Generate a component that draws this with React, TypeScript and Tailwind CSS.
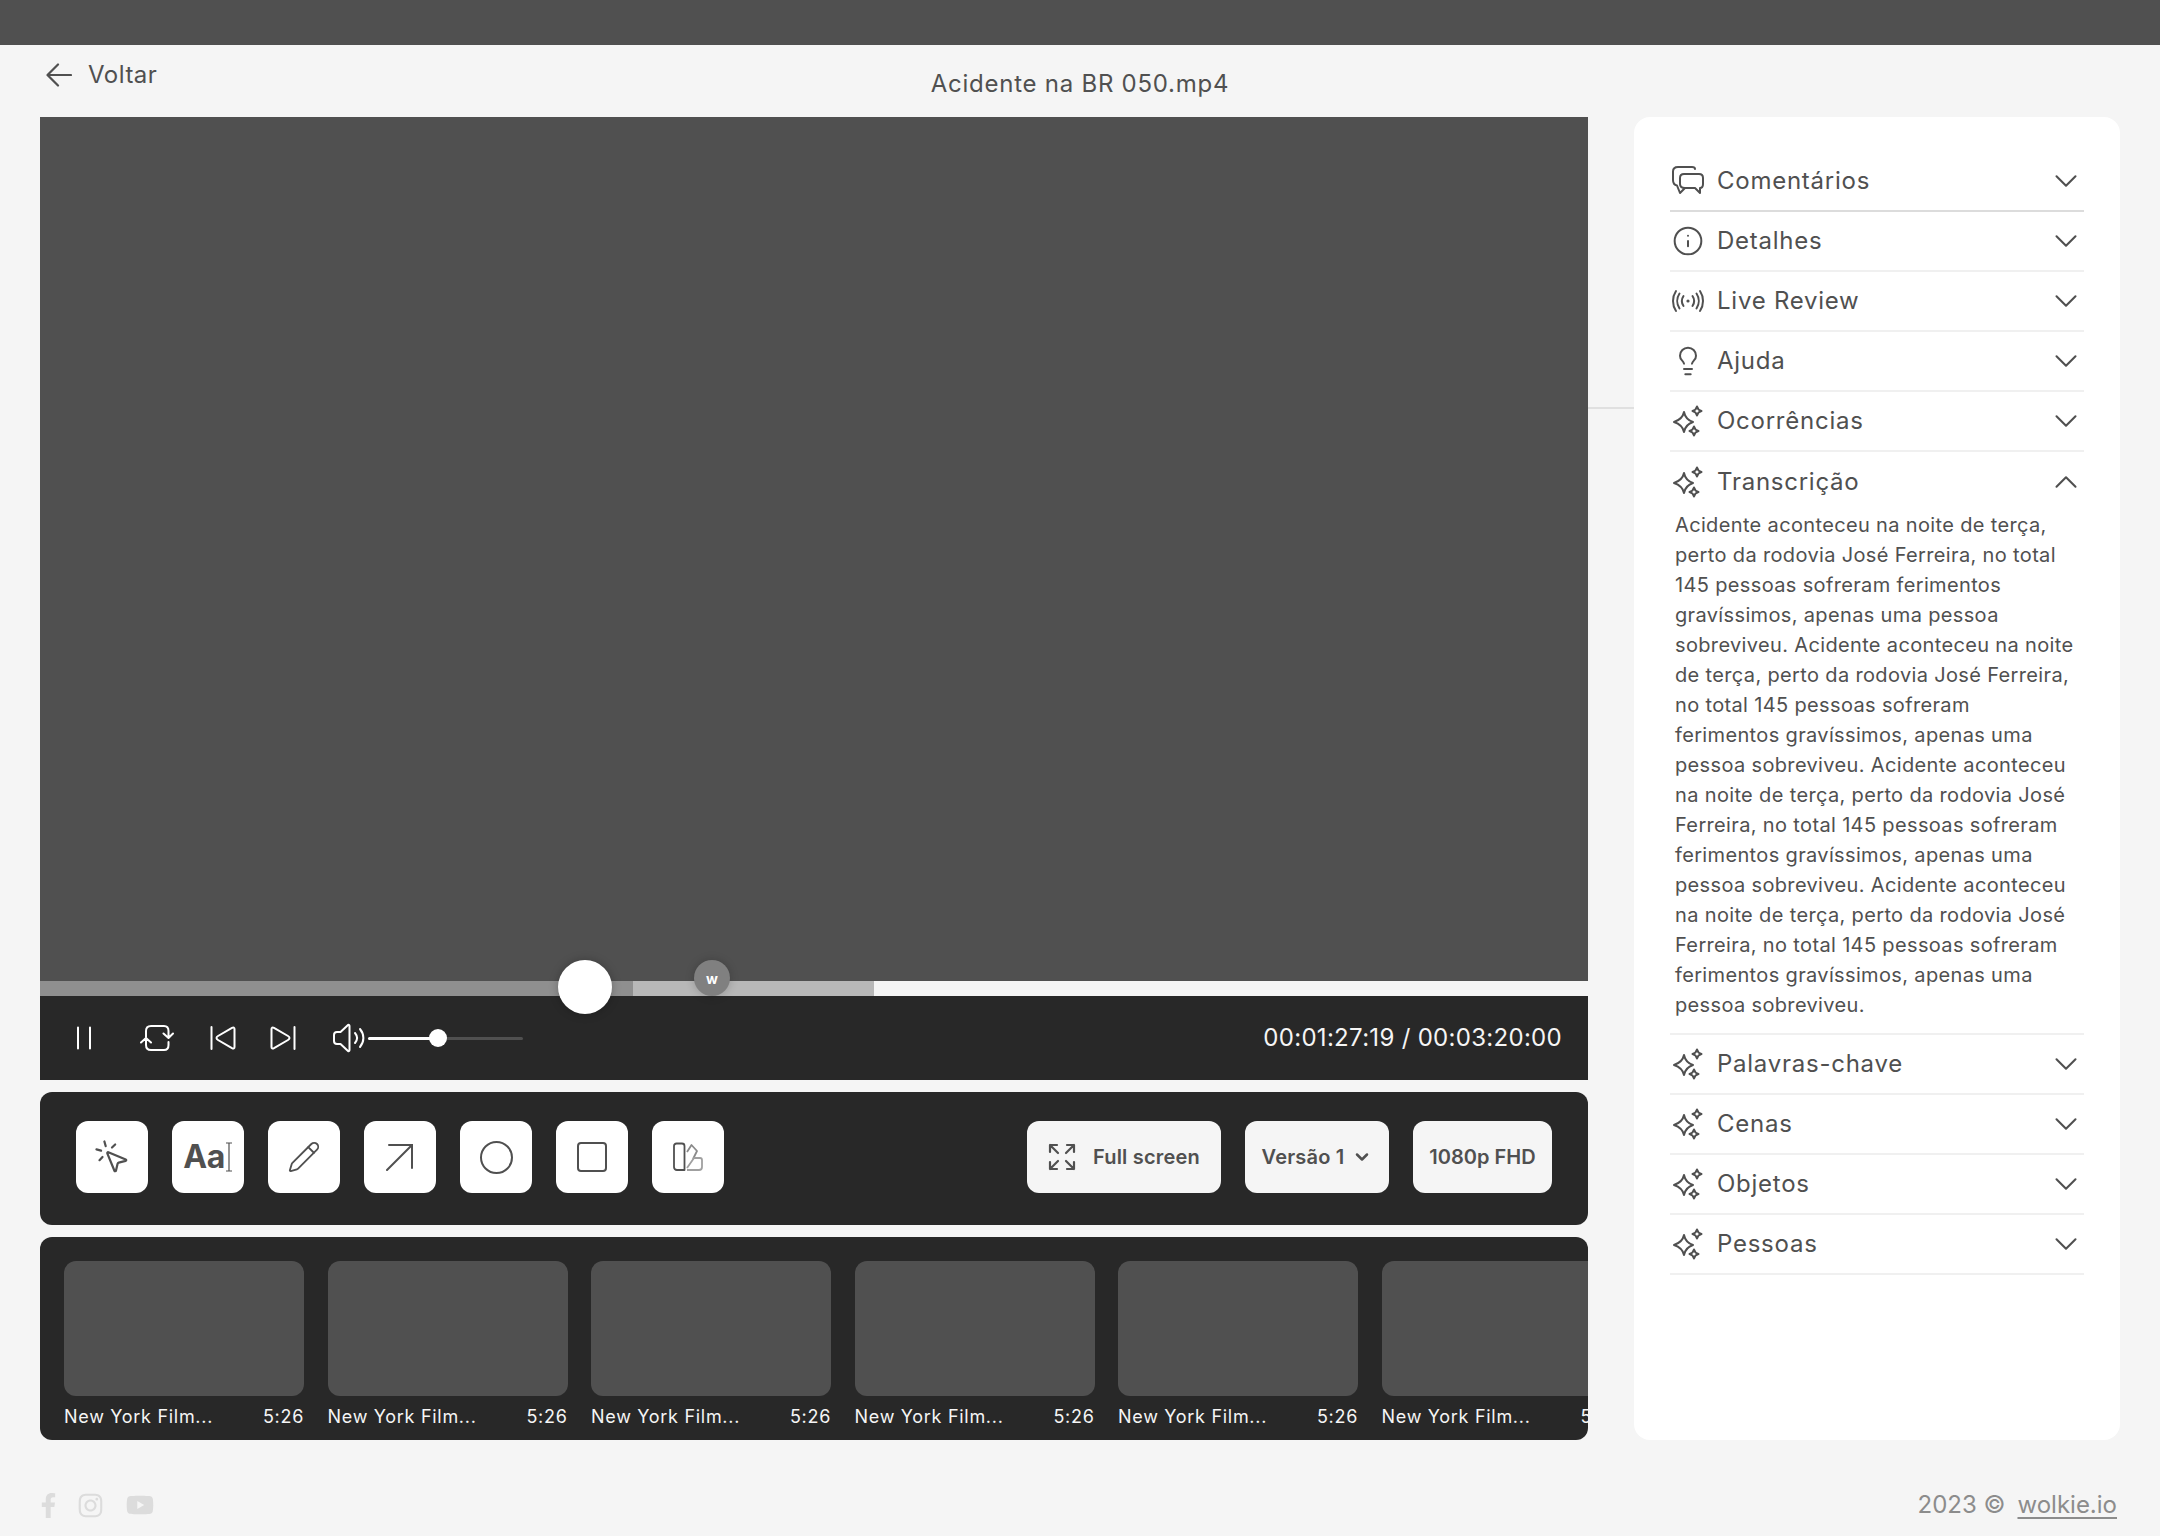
import { ChevronDown, ChevronUp, Info, Lightbulb, MousePointerClick, Pencil } from "lucide-react"
import { FaFacebookF, FaInstagram, FaYoutube } from "react-icons/fa"

const transcript = [
  "Acidente aconteceu na noite de terça,",
  "perto da rodovia José Ferreira, no total",
  "145 pessoas sofreram ferimentos",
  "gravíssimos, apenas uma pessoa",
  "sobreviveu. Acidente aconteceu na noite",
  "de terça, perto da rodovia José Ferreira,",
  "no total 145 pessoas sofreram",
  "ferimentos gravíssimos, apenas uma",
  "pessoa sobreviveu. Acidente aconteceu",
  "na noite de terça, perto da rodovia José",
  "Ferreira, no total 145 pessoas sofreram",
  "ferimentos gravíssimos, apenas uma",
  "pessoa sobreviveu. Acidente aconteceu",
  "na noite de terça, perto da rodovia José",
  "Ferreira, no total 145 pessoas sofreram",
  "ferimentos gravíssimos, apenas uma",
  "pessoa sobreviveu.",
]

function Sparkles() {
  return (
    <svg viewBox="0 0 32 32" className="w-8 h-8" fill="none" stroke="#505050" strokeWidth="2" strokeLinejoin="round">
      <path d="M12 7 C13 12 15 15 21 17 C15 19 13 22 12 27 C11 22 8 19 2 17 C8 15 11 12 12 7 Z" />
      <path d="M25 1.5 C25.5 4 26.5 5.2 29.5 6 C26.5 6.8 25.5 8 25 10.5 C24.5 8 23.5 6.8 20.5 6 C23.5 5.2 24.5 4 25 1.5 Z" />
      <path d="M22 21.5 C22.5 24 23.5 25.2 26.5 26 C23.5 26.8 22.5 28 22 30.5 C21.5 28 20.5 26.8 17.5 26 C20.5 25.2 21.5 24 22 21.5 Z" />
    </svg>
  )
}

function CommentsIcon() {
  return (
    <svg viewBox="0 0 32 32" className="w-8 h-8" fill="none" stroke="#505050" strokeWidth="2" strokeLinejoin="round" strokeLinecap="round">
      <path d="M23 4 C23 2.5 22 2 20 2 H6 C3 2 1 3.5 1 6.5 V15 C1 18 2.5 20 5 20.5 L8 28 L13 23" />
      <path d="M12 9 H27 C29.5 9 31 10.5 31 13 V19 C31 21.5 30 23 28 23 L28 28 L23 23 H13 C10 23 8 21.5 8 19 V13 C8 10.5 9.5 9 12 9 Z" />
    </svg>
  )
}

function LiveIcon() {
  return (
    <svg viewBox="0 0 32 32" className="w-8 h-8" fill="none" stroke="#505050" strokeWidth="2" strokeLinecap="round">
      <circle cx="16" cy="16" r="1.6" fill="#505050" stroke="none" />
      <path d="M11.5 11 C9.5 14 9.5 18 11.5 21 M20.5 11 C22.5 14 22.5 18 20.5 21" />
      <path d="M7.5 8.5 C4.5 13 4.5 19 7.5 23.5 M24.5 8.5 C27.5 13 27.5 19 24.5 23.5" />
      <path d="M4 6 C0 12 0 20 4 26 M28 6 C32 12 32 20 28 26" />
    </svg>
  )
}

const sections = [
  { label: "Comentários", icon: <CommentsIcon />, strong: true },
  { label: "Detalhes", icon: <Info className="w-8 h-8 text-[#505050]" strokeWidth={1.5} /> },
  { label: "Live Review", icon: <LiveIcon /> },
  { label: "Ajuda", icon: <Lightbulb className="w-8 h-8 text-[#505050]" strokeWidth={1.5} /> },
  { label: "Ocorrências", icon: <Sparkles /> },
]

const aiSections = ["Palavras-chave", "Cenas", "Objetos", "Pessoas"]

function Row({ label, icon, open, strong }: { label: string; icon: React.ReactNode; open?: boolean; strong?: boolean }) {
  return (
    <div className={`h-[60px] flex items-center ${open ? "" : strong ? "border-b-2 border-[#dcdcdc]" : "border-b-2 border-[#f0f0f0]"}`}>
      <div className="w-[47px] pl-[2px] shrink-0 flex items-center">{icon}</div>
      <span className="flex-1 text-[24px] tracking-[0.75px] text-[#505050]">{label}</span>
      {open ? (
        <ChevronUp className="w-[38px] h-[38px] mr-[-1px] text-[#505050]" strokeWidth={1.3} />
      ) : (
        <ChevronDown className="w-[38px] h-[38px] mr-[-1px] text-[#505050]" strokeWidth={1.3} />
      )}
    </div>
  )
}

function ToolButton({ children }: { children: React.ReactNode }) {
  return <button className="w-[72px] h-[72px] rounded-[12px] bg-white flex items-center justify-center text-[#505050]">{children}</button>
}

export default function App() {
  return (
    <div className="min-h-[1536px] bg-[#f5f5f5] font-['Inter',sans-serif] text-[#505050]">
      <div className="h-[45px] bg-[#505050]" />

      {/* Header */}
      <div className="h-[72px] grid grid-cols-3 px-[40px]">
        <div className="flex items-center gap-[16px] pb-[13px] pl-[6px]">
          <svg viewBox="0 0 26 24" className="w-[26px] h-[24px]" fill="none" stroke="#505050" strokeWidth="2.2" strokeLinecap="round" strokeLinejoin="round">
            <path d="M25 12 H2 M12 1.5 L1.5 12 L12 22.5" />
          </svg>
          <span className="text-[24px] tracking-[0.5px]">Voltar</span>
        </div>
        <div className="text-center text-[24px] tracking-[0.75px] pt-[21px] whitespace-nowrap">Acidente na BR 050.mp4</div>
      </div>

      <div className="flex px-[40px]">
        {/* Left column */}
        <div className="w-[1548px] shrink-0">
          <div className="h-[864px] bg-[#505050]" />

          {/* Progress */}
          <div className="relative h-[15px] flex bg-[#f5f5f5]">
            <div className="w-[593px] bg-[#8f8f8f]" />
            <div className="w-[241px] bg-[#b8b8b8]" />
            <div className="absolute left-[518px] top-[-21px] w-[54px] h-[54px] rounded-full bg-white shadow-[0_0_10px_rgba(0,0,0,0.25)]" />
            <div className="absolute left-[654px] top-[-21px] w-[36px] h-[36px] rounded-full bg-[#808080] shadow-[0_0_10px_rgba(0,0,0,0.2)] flex items-center justify-center text-white text-[14px] font-bold">
              w
            </div>
          </div>

          {/* Player controls */}
          <div className="h-[84px] bg-[#282828] flex items-center pl-[37px] pr-[26px] text-white">
            <svg viewBox="0 0 14 24" className="w-[14px] h-[24px]" stroke="white" strokeWidth="2" strokeLinecap="round">
              <path d="M1 1.5 V22.5 M13 1.5 V22.5" />
            </svg>
            <svg viewBox="0 0 34 28" className="w-[34px] h-[28px] ml-[49px]" fill="none" stroke="white" strokeWidth="2" strokeLinecap="round" strokeLinejoin="round">
              <path d="M6 13 V7 C6 3.5 8 2 11 2 H24 C27 2 28.5 4 28.5 7 V13 M23.5 9.5 L28.5 14 L33 9.5" />
              <path d="M6 15 V21 C6 24.500 8 26 11 26 H24 C27 26 28.5 24.500 28.5 21 V18 M1 18.500 L6 14 L11 18.500" />
            </svg>
            <svg viewBox="0 0 26 24" className="w-[26px] h-[24px] ml-[36px]" fill="none" stroke="white" strokeWidth="2" strokeLinecap="round" strokeLinejoin="round">
              <path d="M1.500 1 V23 M24.500 3 C24.500 1.500 23.500 1 22 1.800 L8 10 C6 11.200 6 12.800 8 14 L22 22.200 C23.500 23 24.500 22.500 24.500 21 Z" />
            </svg>
            <svg viewBox="0 0 26 24" className="w-[26px] h-[24px] ml-[34px]" fill="none" stroke="white" strokeWidth="2" strokeLinecap="round" strokeLinejoin="round">
              <path d="M24.500 1 V23 M1.500 3 C1.500 1.500 2.500 1 4 1.800 L18 10 C20 11.200 20 12.800 18 14 L4 22.200 C2.500 23 1.500 22.500 1.500 21 Z" />
            </svg>
            <svg viewBox="0 0 32 30" className="w-[32px] h-[30px] ml-[37px]" fill="none" stroke="white" strokeWidth="2" strokeLinecap="round" strokeLinejoin="round">
              <path d="M15 2 L7.500 9 H4 C2 9 1 10.500 1 12 V18 C1 19.500 2 21 4 21 H7.500 L15 28 C16 28.500 16.500 28 16.500 27 V3 C16.500 2 16 1.500 15 2 Z" />
              <path d="M22 10 C24.500 13 24.500 17 22 20 M27 6 C31.500 11.500 31.500 18.500 27 24" />
            </svg>
            <div className="relative w-[155px] h-[3px] ml-[3px] bg-[#505050] rounded-full">
              <div className="h-full w-[70px] bg-white rounded-full" />
              <div className="absolute left-[61px] top-[-7.500px] w-[18px] h-[18px] rounded-full bg-white" />
            </div>
            <div className="ml-auto text-[24px] text-[#f5f5f5] whitespace-nowrap tracking-[0.3px]">00:01:27:19 / 00:03:20:00</div>
          </div>

          {/* Toolbar */}
          <div className="mt-[12px] h-[133px] rounded-[12px] bg-[#282828] flex items-center px-[36px] pb-[3px] justify-between">
            <div className="flex gap-[24px]">
              <ToolButton>
                <MousePointerClick className="w-[38px] h-[38px]" strokeWidth={1.4} />
              </ToolButton>
              <ToolButton>
                <span className="text-[32px] font-bold tracking-[-0.5px]">Aa</span>
                <svg viewBox="0 0 8 30" className="w-[8px] h-[30px]" fill="none" stroke="#505050" strokeWidth="1.2">
                  <path d="M1 1 H7 M4 1 V29 M1 29 H7" />
                </svg>
              </ToolButton>
              <ToolButton>
                <Pencil className="w-[34px] h-[34px]" strokeWidth={1.3} />
              </ToolButton>
              <ToolButton>
                <svg viewBox="0 0 28 28" className="w-[28px] h-[28px]" fill="none" stroke="#505050" strokeWidth="2" strokeLinecap="round">
                  <path d="M3 2 H26 V25 M26 2 L1 27" />
                </svg>
              </ToolButton>
              <ToolButton>
                <div className="w-[33px] h-[33px] rounded-full border-2 border-[#505050]" />
              </ToolButton>
              <ToolButton>
                <div className="w-[30px] h-[30px] rounded-[4px] border-2 border-[#505050]" />
              </ToolButton>
              <ToolButton>
                <svg viewBox="0 0 30 30" className="w-[30px] h-[30px]" fill="none" stroke="#505050" strokeWidth="1.8" strokeLinejoin="round">
                  <path d="M1 4 C1 2.500 2 1.500 3.500 1.500 H9 C10.500 1.500 11.500 2.500 11.500 4 V28 H4 C2 28 1 26.500 1 25 Z" />
                  <path d="M14 10 L18.500 3 L24 9 L20 17" stroke="#8a8a8a" />
                  <path d="M14 28 H26 C28 28 29 27 29 25 V18 C29 16.500 28 16 27 16 H21 L14 26" stroke="#a0a0a0" />
                </svg>
              </ToolButton>
            </div>

            <div className="flex gap-[24px] text-[20px] font-semibold">
              <button className="h-[72px] w-[194px] rounded-[12px] bg-[#f5f5f5] flex items-center justify-center gap-[17px]">
                <svg viewBox="0 0 28 28" className="w-[28px] h-[28px]" fill="none" stroke="#505050" strokeWidth="2.200" strokeLinecap="round" strokeLinejoin="round">
                  <path d="M2 9 V2 H9 M2 2 L10 10 M26 9 V2 H19 M26 2 L18 10 M2 19 V26 H9 M2 26 L10 18 M26 19 V26 H19 M26 26 L18 18" />
                </svg>
                <span className="tracking-[0.2px] whitespace-nowrap">Full screen</span>
              </button>
              <button className="h-[72px] w-[144px] rounded-[12px] bg-[#f5f5f5] flex items-center justify-center gap-[8px]">
                <span className="whitespace-nowrap tracking-[0.2px]">Versão 1</span>
                <ChevronDown className="w-[20px] h-[20px]" strokeWidth={3} />
              </button>
              <button className="h-[72px] w-[139px] rounded-[12px] bg-[#f5f5f5] flex items-center justify-center whitespace-nowrap">
                1080p FHD
              </button>
            </div>
          </div>

          {/* Thumbnails */}
          <div className="mt-[12px] h-[203px] rounded-[12px] bg-[#282828] overflow-hidden flex gap-[23.500px] pl-[24px] pt-[24px]">
            {[0, 1, 2, 3, 4, 5].map((i) => (
              <div key={i} className="w-[240px] shrink-0">
                <div className="h-[135px] rounded-[12px] bg-[#505050]" />
                <div className="flex justify-between mt-[7px] text-[18px] tracking-[0.7px] text-[#f5f5f5]">
                  <span>New York Film...</span>
                  <span>5:26</span>
                </div>
              </div>
            ))}
          </div>
        </div>

        {/* Connector between video and panel */}
        <div className="w-[46px] shrink-0 h-[2px] mt-[290px] bg-[#e0e0e0]" />

        {/* Right panel */}
        <div className="w-[486px] h-[1323px] shrink-0 rounded-[16px] bg-white pt-[35px] pl-[36px] pr-[36px]">
          {sections.map((s) => (
            <Row key={s.label} label={s.label} icon={s.icon} strong={s.strong} />
          ))}
          <Row label="Transcrição" icon={<Sparkles />} open />
          <div className="pl-[5px] pb-[13px] border-b-2 border-[#f0f0f0] text-[20px] leading-[30px] tracking-[0.35px] mt-[-2px]">
            {transcript.map((line, i) => (
              <div key={i} className="whitespace-nowrap">{line}</div>
            ))}
          </div>
          {aiSections.map((label) => (
            <Row key={label} label={label} icon={<Sparkles />} />
          ))}
        </div>
      </div>

      {/* Footer */}
      <div className="flex items-center justify-between px-[40px] pt-[47px]">
        <div className="flex items-center text-[#dcdcdc]">
          <FaFacebookF className="w-[17px] h-[25px]" />
          <FaInstagram className="w-[27px] h-[27px] ml-[20px]" />
          <FaYoutube className="w-[28px] h-[28px] ml-[22px]" />
        </div>
        <div className="text-[24px] text-[#8c8c8c] pr-[3px]">
          2023 ©<span className="ml-[12px] underline underline-offset-4">wolkie.io</span>
        </div>
      </div>
    </div>
  )
}
